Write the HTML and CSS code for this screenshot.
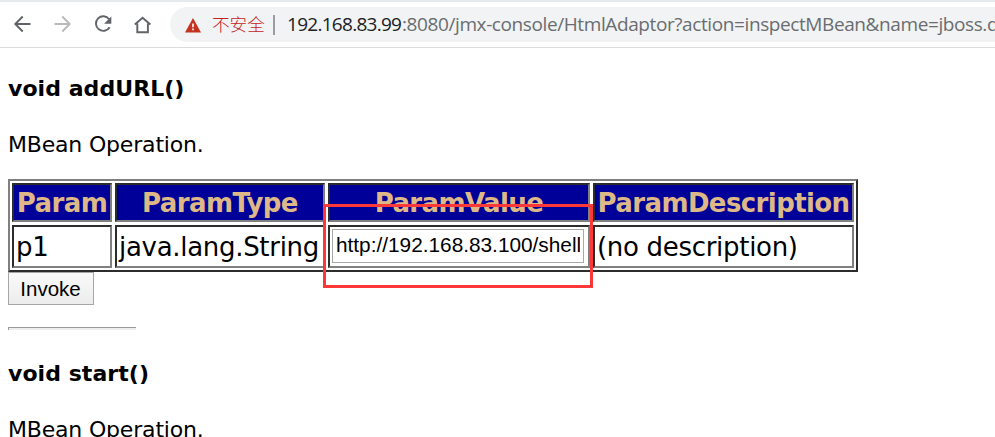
FILE: index.html
```html
<!DOCTYPE html>
<html lang="en">
<head>
<meta charset="utf-8">
<title>MBean Inspector</title>
<link rel="stylesheet" href="styles.css">
</head>
<body>
<header class="toolbar">
  <svg class="nav" width="170" height="45" viewBox="0 0 170 45" fill="none" stroke="#5f6368" stroke-width="1.9">
    <path d="M30.5 22H16M22.7 14.5L15.3 22l7.4 7.5"/>
    <path stroke="#bababa" d="M54.5 22H69M62.3 14.5l7.4 7.5-7.4 7.5"/>
    <path d="M109.1 17.2A7.3 7.3 0 1 0 109.6 25.2"/>
    <path fill="#5f6368" stroke="none" d="M111.3 14.5v7.2h-7.2z"/>
    <path d="M134.8 22.5l7.8-6.8 7.8 6.8M137.3 21.4v8.9h10.6v-8.9"/>
  </svg>
  <div class="omnibox">
    <svg class="warning" width="16" height="15" viewBox="0 0 16 15"><path fill="#c5321f" d="M8 0l8 14.5H0z"/><path stroke="#f1f3f4" stroke-width="1.7" d="M8 5.5v3.8M8 10.6v1.7"/></svg>
    <span class="insecure">不安全</span>
    <span class="separator"></span>
    <span class="host">192.168.83.99</span><span class="path">:8080/jmx-console/HtmlAdaptor?action=inspectMBean&amp;name=jboss.d</span>
  </div>
</header>
<main>
  <h4>void addURL()</h4>
  <p>MBean Operation.</p>
  <div class="params">
    <div class="cell head"><span>Param</span></div>
    <div class="cell head"><span>ParamType</span></div>
    <div class="cell head"><span>ParamValue</span></div>
    <div class="cell head"><span>ParamDescription</span></div>
    <div class="cell"><span>p1</span></div>
    <div class="cell"><span>java.lang.String</span></div>
    <div class="cell"><input type="text" value="http://192.168.83.100/shell"></div>
    <div class="cell"><span>(no description)</span></div>
    <div class="highlight"></div>
  </div>
  <button type="button">Invoke</button>
  <div class="rule"></div>
  <h4>void start()</h4>
  <p>MBean Operation.</p>
</main>
</body>
</html>
```
FILE: styles.css
```css
* { box-sizing: border-box; }
html, body { height: 100%; overflow: hidden; }
body { margin: 0; background: #fff; color: #000; font-family: Verdana, "DejaVu Sans", sans-serif; font-size: 22px; }
.toolbar { display: flex; height: 48px; border-top: 2px solid #e7eaed; border-bottom: 1px solid #dcdcdc; overflow: hidden; }
.nav { flex: none; }
.omnibox { display: flex; align-items: center; flex: none; width: 860px; height: 35px; margin-top: 5px; padding-left: 15px; border-radius: 18px; background: #f1f3f4; white-space: nowrap; font-family: "Open Sans", "Noto Sans CJK SC", sans-serif; font-size: 19px; line-height: 35px; }
.omnibox > * { flex: none; }
.warning { margin-top: 2px; }
.insecure { width: 53px; height: 35px; margin-left: 11px; line-height: 33px; color: #c5221f; font-family: "Noto Sans CJK SC", sans-serif; font-size: 17.6px; font-weight: 300; }
.separator { width: 2px; height: 20px; margin: 0 12px 0 8px; background: #9b9ea1; }
.host { width: 115px; color: #202124; letter-spacing: -.72px; }
.path { color: #6a6d70; letter-spacing: -.4px; }
main { padding: 0 8px; }
h4 { height: 26px; margin: 28px 0 30px; line-height: 26px; font-size: 22px; letter-spacing: .06px; }
p { height: 26px; margin: 0 0 21px; line-height: 26px; letter-spacing: -.18px; }
.params { position: relative; display: grid; grid-template-columns: 100px 210px 262px 261px; grid-template-rows: 39px 43px; gap: 3px; width: 850px; height: 93px; padding: 2px; border: 2px solid; border-color: #808080 #2c2c2c #2c2c2c #808080; font-size: 26px; }
.cell { display: flex; align-items: center; min-width: 0; padding: 0 2px; border: 2px solid; border-color: #2c2c2c #808080 #808080 #2c2c2c; line-height: 32px; letter-spacing: -.3px; white-space: nowrap; }
.head { justify-content: center; background: #000099; color: #deb887; font-weight: bold; letter-spacing: -.6px; }
input { width: 252px; height: 34px; padding: 0 3px 2px; margin-bottom: 1px; border: 1px solid #a9a9a9; font: 20.8px "Liberation Sans", Arial, sans-serif; }
.highlight { position: absolute; left: 313px; top: 23px; width: 270px; height: 84px; border: 3px solid #fd3838; }
button { display: block; width: 86px; height: 33px; padding: 0 1px 0 0; border: 1px solid #a6a6a6; border-radius: 0; background: linear-gradient(#fafafa, #ececec); color: #000; font: 20.5px "Liberation Sans", Arial, sans-serif; }
.rule { width: 128px; height: 3px; margin-top: 22px; border-top: 1px solid #999; border-left: 1px solid #999; background: #eee; }
.rule + h4 { margin-top: 31px; }
.rule ~ p { height: 20px; margin: 0; }
```
